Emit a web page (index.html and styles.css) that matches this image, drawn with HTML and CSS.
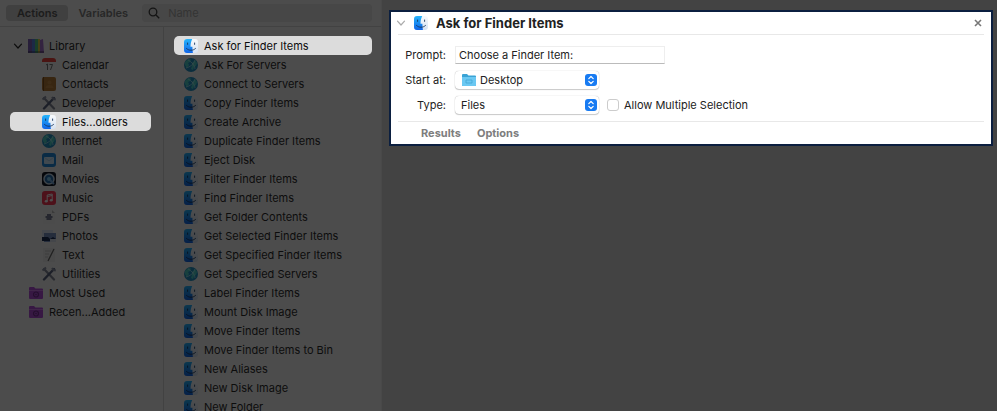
FILE: index.html
```html
<!DOCTYPE html>
<html lang="en">
<head>
    <meta charset="UTF-8">
    <meta name="viewport" content="width=device-width, initial-scale=1.0">
    <title>Automator</title>
    <link rel="stylesheet" href="styles.css">
</head>
<body>
    <!-- icons shared by the lists and the action card -->
    <svg class="sprite" aria-hidden="true">
        <defs>
            <linearGradient id="blue" x1="0" y1="0" x2="0" y2="1">
                <stop offset="0" stop-color="#25b4fb"/>
                <stop offset="1" stop-color="#1065e8"/>
            </linearGradient>
            <linearGradient id="face" x1="0" y1="0" x2="0" y2="1">
                <stop offset="0" stop-color="#f8fafc"/>
                <stop offset="1" stop-color="#d5e2f2"/>
            </linearGradient>
        </defs>
        <symbol id="finder" viewBox="0 0 16 16">
            <rect x="1" y="1" width="14" height="14" rx="3" fill="url(#face)"/>
            <path d="M4 1h5.200C8 3.500 7.500 6 7.500 8.800h1.900c0 2.200.1 4.200.5 6.200H4a3 3 0 0 1-3-3V4a3 3 0 0 1 3-3z" fill="url(#blue)"/>
            <path d="M4.600 5v1.400M11.600 5v1.400M3.500 10.500c2.500 2.400 6.500 2.400 9 0" fill="none" stroke="#16355c" stroke-width=".9" stroke-linecap="round"/>
        </symbol>
        <symbol id="globe" viewBox="0 0 16 16">
            <circle cx="8" cy="8" r="7" fill="#2292c4"/>
            <path d="M2 5l3-3 3 .5L7 5 5 6l1 2-2 3-2-3zM9 6l3-3 2 3-1 3-2 1-1 3-2-1 1-3z" fill="#4fd0c9"/>
            <path d="M3 11c4-1 8-4 9-8M5 3c4 2 7 6 7 9" fill="none" stroke="#b8edf5" stroke-width=".7"/>
        </symbol>
        <symbol id="library" viewBox="0 0 16 16">
            <path d="M0 1h4v14H0z" fill="#7d62b8"/>
            <path d="M4 1h3v14H4z" fill="#5b83e3"/>
            <path d="M7 1h3v14H7z" fill="#54c888"/>
            <path d="M10 1h2v14h-2z" fill="#e2d34c"/>
            <path d="M12 2l3-1 1 14h-4z" fill="#a470cf"/>
            <path d="M0 13h16v2H0z" fill="#334" opacity=".4"/>
        </symbol>
        <symbol id="calendar" viewBox="0 0 16 16">
            <rect x="1" y="1" width="14" height="14" rx="3" fill="#f4f4f4"/>
            <path d="M1 5V4a3 3 0 0 1 3-3h8a3 3 0 0 1 3 3v1z" fill="#f0443c"/>
            <path d="M5 8l1.500-1v6M8.500 7.500h3L9.500 13" fill="none" stroke="#777" stroke-width="1"/>
        </symbol>
        <symbol id="contacts" viewBox="0 0 16 16">
            <rect x="1" y="1" width="14" height="14" rx="2" fill="#b57b36"/>
            <path d="M2 1h1v14H2z" fill="#80521c"/>
            <circle cx="8.500" cy="6.500" r="2" fill="#c48c48"/>
            <path d="M4.500 12c0-4 8-4 8 0z" fill="#c48c48"/>
        </symbol>
        <symbol id="tools" viewBox="0 0 16 16">
            <path d="M3 3l10 10.500" stroke="#848998" stroke-width="2.200" stroke-linecap="round"/>
            <path d="M13 3L3 13.500" stroke="#5b6480" stroke-width="2.400" stroke-linecap="round"/>
            <path d="M1.500 4.500L5 1.500M11 2l1.500 2 2.300.5" fill="none" stroke="#8c92a4" stroke-width="2"/>
        </symbol>
        <symbol id="mail" viewBox="0 0 16 16">
            <rect x="1" y="1" width="14" height="14" rx="3" fill="#208cdd"/>
            <rect x="3" y="5" width="10" height="7" rx="1" fill="#d3ecff"/>
            <path d="M3 5l5 4 5-4" fill="none" stroke="#a0cdee" stroke-width=".8"/>
        </symbol>
        <symbol id="movies" viewBox="0 0 16 16">
            <rect x="1" y="1" width="14" height="14" rx="3" fill="#101522"/>
            <circle cx="8" cy="8" r="5" fill="#276fad" stroke="#c5d8e8" stroke-width="1.500"/>
            <circle cx="8" cy="8" r="2" fill="#7fcdf6"/>
            <path d="M9 9l4 4" stroke="#78aadd" stroke-width="2"/>
        </symbol>
        <symbol id="music" viewBox="0 0 16 16">
            <rect x="1" y="1" width="14" height="14" rx="3" fill="#f73753"/>
            <path d="M6.200 11V5l5-1v6M6.200 6.500l5-1" fill="none" stroke="#fff" stroke-width="1"/>
            <ellipse cx="5.200" cy="11.200" rx="1.500" ry="1.200" fill="#fff"/>
            <ellipse cx="10.200" cy="10.200" rx="1.500" ry="1.200" fill="#fff"/>
        </symbol>
        <symbol id="pdfs" viewBox="0 0 16 16">
            <path d="M2 1h9l3 3v11H2z" fill="#f2f2f2"/>
            <path d="M11 1v3h3z" fill="#bbb"/>
            <path d="M6 6h4M4.500 8h7M5.500 10h5" stroke="#4e5674" stroke-width="1.400"/>
        </symbol>
        <symbol id="photos" viewBox="0 0 16 16">
            <path d="M1 2h11v9H1z" fill="#dce6f5"/>
            <path d="M3 5h12v9H3z" fill="#7692c3"/>
            <path d="M1 9h6l2 2 3-2 3 2v2H1z" fill="#1b2d54"/>
            <path d="M9 11h6v3H9z" fill="#dbe3ef"/>
        </symbol>
        <symbol id="text" viewBox="0 0 16 16">
            <path d="M2 1h12v14H2z" fill="#ededed"/>
            <path d="M4 4h6M4 7h4M4 10h3" stroke="#bbb" stroke-width=".8"/>
            <path d="M13 2L7 14" stroke="#686868" stroke-width="1.300"/>
        </symbol>
        <symbol id="smart" viewBox="0 0 16 16">
            <path d="M1 3a1 1 0 0 1 1-1h4l1.500 1.500H14a1 1 0 0 1 1 1V13a1 1 0 0 1-1 1H2a1 1 0 0 1-1-1z" fill="#b34fd9"/>
            <path d="M1 5h14v1H1z" fill="#d07bed"/>
            <circle cx="8" cy="9.500" r="2.500" fill="none" stroke="#763093" stroke-width="1.200"/>
            <circle cx="8" cy="9.500" r=".8" fill="#763093"/>
        </symbol>
        <symbol id="folder" viewBox="0 0 16 16">
            <path d="M1 3a1 1 0 0 1 1-1h4l1.500 1.500H14a1 1 0 0 1 1 1V13a1 1 0 0 1-1 1H2a1 1 0 0 1-1-1z" fill="#3aa3d5"/>
            <path d="M1 5h14v8a1 1 0 0 1-1 1H2a1 1 0 0 1-1-1z" fill="#6bc8f2"/>
            <path d="M5 8h6v3H5z" fill="none" stroke="#42a5d4" stroke-width=".8"/>
        </symbol>
        <symbol id="chevron" viewBox="0 0 10 10">
            <path d="M1.500 3.200L5 7l3.500-3.800" fill="none" stroke="currentColor" stroke-width="1.200" stroke-linecap="round" stroke-linejoin="round"/>
        </symbol>
        <symbol id="updown" viewBox="0 0 12 12">
            <rect width="12" height="12" rx="3" fill="#187bf2"/>
            <path d="M3.800 4.700L6 2.500l2.200 2.200M3.800 7.300L6 9.500l2.200-2.200" fill="none" stroke="#fff" stroke-width="1.200" stroke-linecap="round" stroke-linejoin="round"/>
        </symbol>
    </svg>

    <div class="window">
        <section class="panel">
            <header class="toolbar">
                <div class="tabs">
                    <button type="button" class="tab active">Actions</button>
                    <button type="button" class="tab">Variables</button>
                </div>
                <label class="search">
                    <svg viewBox="0 0 12 12" aria-hidden="true"><circle cx="5" cy="5" r="3.800"/><path d="M8 8l3.200 3.200"/></svg>
                    <input type="search" placeholder="Name" aria-label="Name">
                </label>
            </header>

            <div class="lists">
                <nav class="sidebar">
                    <a href="#" class="row top"><svg class="arrow"><use href="#chevron"/></svg><svg class="icon"><use href="#library"/></svg>Library</a>
                    <a href="#" class="row"><svg class="icon"><use href="#calendar"/></svg>Calendar</a>
                    <a href="#" class="row"><svg class="icon"><use href="#contacts"/></svg>Contacts</a>
                    <a href="#" class="row"><svg class="icon"><use href="#tools"/></svg>Developer</a>
                    <a href="#" class="row selected"><svg class="icon"><use href="#finder"/></svg>Files...olders</a>
                    <a href="#" class="row"><svg class="icon"><use href="#globe"/></svg>Internet</a>
                    <a href="#" class="row"><svg class="icon"><use href="#mail"/></svg>Mail</a>
                    <a href="#" class="row"><svg class="icon"><use href="#movies"/></svg>Movies</a>
                    <a href="#" class="row"><svg class="icon"><use href="#music"/></svg>Music</a>
                    <a href="#" class="row"><svg class="icon"><use href="#pdfs"/></svg>PDFs</a>
                    <a href="#" class="row"><svg class="icon"><use href="#photos"/></svg>Photos</a>
                    <a href="#" class="row"><svg class="icon"><use href="#text"/></svg>Text</a>
                    <a href="#" class="row"><svg class="icon"><use href="#tools"/></svg>Utilities</a>
                    <a href="#" class="row group"><svg class="icon"><use href="#smart"/></svg>Most Used</a>
                    <a href="#" class="row group"><svg class="icon"><use href="#smart"/></svg>Recen...Added</a>
                </nav>

                <div class="actions">
                    <a href="#" class="row selected"><svg class="icon"><use href="#finder"/></svg>Ask for Finder Items</a>
                    <a href="#" class="row"><svg class="icon"><use href="#globe"/></svg>Ask For Servers</a>
                    <a href="#" class="row"><svg class="icon"><use href="#globe"/></svg>Connect to Servers</a>
                    <a href="#" class="row"><svg class="icon"><use href="#finder"/></svg>Copy Finder Items</a>
                    <a href="#" class="row"><svg class="icon"><use href="#finder"/></svg>Create Archive</a>
                    <a href="#" class="row"><svg class="icon"><use href="#finder"/></svg>Duplicate Finder Items</a>
                    <a href="#" class="row"><svg class="icon"><use href="#finder"/></svg>Eject Disk</a>
                    <a href="#" class="row"><svg class="icon"><use href="#finder"/></svg>Filter Finder Items</a>
                    <a href="#" class="row"><svg class="icon"><use href="#finder"/></svg>Find Finder Items</a>
                    <a href="#" class="row"><svg class="icon"><use href="#finder"/></svg>Get Folder Contents</a>
                    <a href="#" class="row"><svg class="icon"><use href="#finder"/></svg>Get Selected Finder Items</a>
                    <a href="#" class="row"><svg class="icon"><use href="#finder"/></svg>Get Specified Finder Items</a>
                    <a href="#" class="row"><svg class="icon"><use href="#globe"/></svg>Get Specified Servers</a>
                    <a href="#" class="row"><svg class="icon"><use href="#finder"/></svg>Label Finder Items</a>
                    <a href="#" class="row"><svg class="icon"><use href="#finder"/></svg>Mount Disk Image</a>
                    <a href="#" class="row"><svg class="icon"><use href="#finder"/></svg>Move Finder Items</a>
                    <a href="#" class="row"><svg class="icon"><use href="#finder"/></svg>Move Finder Items to Bin</a>
                    <a href="#" class="row"><svg class="icon"><use href="#finder"/></svg>New Aliases</a>
                    <a href="#" class="row"><svg class="icon"><use href="#finder"/></svg>New Disk Image</a>
                    <a href="#" class="row"><svg class="icon"><use href="#finder"/></svg>New Folder</a>
                </div>
            </div>
        </section>

        <main class="workflow">
            <form class="card">
                <header class="card-header">
                    <svg class="arrow"><use href="#chevron"/></svg>
                    <svg class="icon"><use href="#finder"/></svg>
                    <h1>Ask for Finder Items</h1>
                    <button type="button" class="close" aria-label="Close">
                        <svg viewBox="0 0 8 8"><path d="M1 1l6 6M7 1L1 7"/></svg>
                    </button>
                </header>

                <div class="fields">
                    <label for="prompt">Prompt:</label>
                    <input type="text" id="prompt" class="prompt" value="Choose a Finder Item:">

                    <label for="start">Start at:</label>
                    <div class="select with-icon">
                        <svg class="icon"><use href="#folder"/></svg>
                        <select id="start"><option>Desktop</option></select>
                        <svg class="updown"><use href="#updown"/></svg>
                    </div>

                    <label for="type">Type:</label>
                    <div class="type-row">
                        <div class="select">
                            <select id="type"><option>Files</option></select>
                            <svg class="updown"><use href="#updown"/></svg>
                        </div>
                        <label class="check"><input type="checkbox"> Allow Multiple Selection</label>
                    </div>
                </div>

                <footer class="card-footer">
                    <button type="button">Results</button>
                    <button type="button">Options</button>
                </footer>
            </form>
        </main>
    </div>
</body>
</html>
```
FILE: styles.css
```css
* {
    box-sizing: border-box;
}
body {
    margin: 0;
    background-color: #434343;
    font-family: Inter, "Liberation Sans", sans-serif;
    font-size: 11px;
    color: #0c0c0c;
}
a {
    color: inherit;
    text-decoration: none;
}
button, input, select {
    font: inherit;
    color: inherit;
    border: none;
    background: none;
    padding: 0;
    margin: 0;
}
.sprite {
    position: absolute;
    width: 0;
    height: 0;
}
.window {
    display: flex;
    height: 100vh;
    overflow: hidden;
}

/* library panel */
.panel {
    display: flex;
    flex-direction: column;
    flex: 0 0 382px;
    background-color: #4c4c4c;
    border-right: 1px solid #494949;
}
.toolbar {
    display: flex;
    flex: none;
    align-items: center;
    gap: 4px;
    height: 27px;
    padding: 0 9px 0 6px;
    border-bottom: 1px solid #424242;
}
.tabs {
    display: flex;
}
.tab {
    height: 16px;
    padding: 0 10px;
    border-radius: 4px;
    font-weight: 600;
    color: #272727;
}
.tab.active {
    padding: 0 11px;
    background-color: #404040;
    color: #1c1c1c;
}
.search {
    display: flex;
    flex: 1;
    align-items: center;
    gap: 8px;
    height: 18px;
    padding: 0 6px;
    border-radius: 4px;
    background-color: #474747;
}
.search svg {
    width: 12px;
    height: 12px;
    fill: none;
    stroke: #141414;
    stroke-width: 1.3;
}
.search input {
    flex: 1;
    min-width: 0;
    outline: none;
}
.search input::placeholder {
    color: #343434;
}
.lists {
    display: flex;
    flex: 1;
    min-height: 0;
}
.sidebar {
    flex: 0 0 164px;
    padding: 9px 12px 0 10px;
    border-right: 1px solid #424242;
}
.actions {
    flex: 1;
    padding: 9px 9px 0 10px;
}
.row {
    display: flex;
    align-items: center;
    gap: 5px;
    height: 19px;
    padding-left: 9px;
    border-radius: 5px;
    white-space: nowrap;
}
.sidebar .row {
    padding-left: 31px;
}
.sidebar .top {
    padding-left: 3px;
}
.sidebar .group {
    padding-left: 18px;
}
.row .icon {
    filter: brightness(0.31);
}
.row.selected {
    background-color: #dcdcdc;
}
.row.selected .icon {
    filter: none;
}
.icon {
    flex: none;
    width: 16px;
    height: 16px;
}
.arrow {
    flex: none;
    width: 10px;
    height: 10px;
}

/* workflow area */
.workflow {
    flex: 1;
    padding: 10px 4px 0 7px;
}
.card {
    padding: 0 7px;
    border: 2px solid #0b1f40;
    background-color: white;
    color: #222;
}
.card-header {
    display: flex;
    align-items: center;
    gap: 7px;
    height: 23px;
    border-bottom: 1px solid #e8e8e8;
}
.card-header .arrow {
    margin-left: -2px;
    color: #aaa;
}
.card-header h1 {
    flex: 1;
    margin: 0;
    font-size: 13px;
    font-weight: 700;
}
.close {
    display: flex;
    padding: 2px;
}
.close svg {
    width: 8px;
    height: 8px;
    stroke: #777;
    stroke-width: 1.6;
}
.fields {
    display: grid;
    grid-template-columns: 48px 1fr;
    grid-auto-rows: 18px;
    gap: 7px 9px;
    align-items: center;
    padding: 11px 0 7px;
}
.fields > label {
    text-align: right;
}
.prompt {
    width: 210px;
    height: 18px;
    padding: 0 3px;
    border: 1px solid #eee;
    border-bottom-color: #bbb;
}
.type-row {
    display: flex;
    align-items: center;
    gap: 8px;
}
.select {
    position: relative;
    display: flex;
    align-items: center;
    width: 144px;
    height: 18px;
    border-radius: 4px;
    box-shadow: 0 0 1px #aaa, 0 1px 1px #ccc;
}
.select select {
    width: 100%;
    height: 100%;
    padding-left: 6px;
    appearance: none;
}
.with-icon select {
    padding-left: 25px;
}
.select .icon {
    position: absolute;
    left: 6px;
}
.updown {
    position: absolute;
    right: 2px;
    width: 12px;
    height: 12px;
    pointer-events: none;
}
.check {
    display: flex;
    align-items: center;
    gap: 5px;
}
.check input {
    width: 12px;
    height: 12px;
    border: 1px solid #ccc;
    border-radius: 3px;
    appearance: none;
}
.check input:checked {
    background-color: #187bf2;
}
.card-footer {
    display: flex;
    gap: 16px;
    height: 23px;
    padding-left: 23px;
    border-top: 1px solid #e8e8e8;
}
.card-footer button {
    font-weight: 700;
    color: #7d7d7d;
}
```
